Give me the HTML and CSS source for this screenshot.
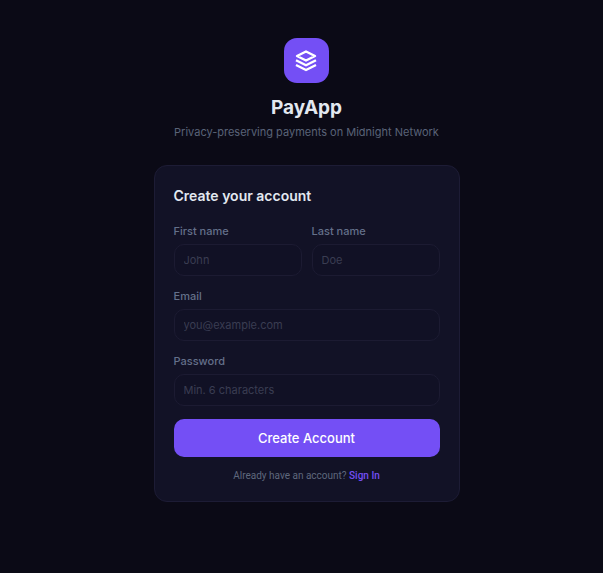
FILE: index.html
```html
<!DOCTYPE html>
<html lang="en">
<head>
<meta charset="utf-8">
<meta name="viewport" content="width=device-width, initial-scale=1">
<title>PayApp</title>
<link rel="stylesheet" href="styles.css">
</head>
<body>
<main class="page">
  <header class="brand">
    <div class="logo">
      <svg width="24" height="24" viewBox="0 0 24 24" fill="none" stroke="currentColor" stroke-width="2.4" stroke-linejoin="round" aria-hidden="true">
        <path d="M12 2.5 3 7l9 4.500L21 7l-9-4.500Z"/>
        <path d="m2 11.200 10 5 10-5"/>
        <path d="m2 16 10 5 10-5"/>
      </svg>
    </div>
    <h1 class="title">PayApp</h1>
    <p class="tagline">Privacy-preserving payments on Midnight Network</p>
  </header>
  <section class="card">
    <h2 class="heading">Create your account</h2>
    <form class="form">
      <div class="row">
        <div class="field">
          <label for="first">First name</label>
          <input id="first" type="text" placeholder="John">
        </div>
        <div class="field">
          <label for="last">Last name</label>
          <input id="last" type="text" placeholder="Doe">
        </div>
      </div>
      <div class="field">
        <label for="email">Email</label>
        <input id="email" type="email" placeholder="you@example.com">
      </div>
      <div class="field">
        <label for="password">Password</label>
        <input id="password" type="password" placeholder="Min. 6 characters">
      </div>
      <button class="submit" type="submit">Create Account</button>
    </form>
    <p class="switch">Already have an account? <a href="#">Sign In</a></p>
  </section>
</main>
</body>
</html>
```
FILE: styles.css
```css
* {
  box-sizing: border-box;
  margin: 0;
}

body {
  background: #0b0a16;
  color: #e2e8f0;
  font-family: Inter, "Liberation Sans", sans-serif;
}

.page {
  min-height: 100vh;
  display: flex;
  flex-direction: column;
  align-items: center;
  padding: 38px 6px 38px 16px;
}

.brand {
  display: flex;
  flex-direction: column;
  align-items: center;
  text-align: center;
}

.logo {
  display: grid;
  place-items: center;
  width: 45px;
  height: 45px;
  margin-bottom: 12px;
  border-radius: 13px;
  background: #744ff5;
  color: #fff;
}

.title {
  font-size: 19px;
  line-height: 26px;
  font-weight: 700;
}

.tagline {
  margin-top: 3px;
  font-size: 11px;
  line-height: 16px;
  color: #5a6378;
}

.card {
  width: 100%;
  max-width: 306px;
  margin-top: 25px;
  padding: 19px 19px 18px;
  border: 1px solid #1d1c35;
  border-radius: 13px;
  background: #121226;
}

.heading {
  font-size: 14px;
  line-height: 22px;
  font-weight: 600;
}

.form {
  display: flex;
  flex-direction: column;
  gap: 13px;
  margin-top: 17px;
}

.row {
  display: grid;
  grid-template-columns: 1fr 1fr;
  gap: 10px;
}

.field label {
  display: block;
  margin-bottom: 5px;
  font-size: 11px;
  line-height: 15px;
  font-weight: 500;
  color: #64708a;
}

.field input {
  display: block;
  width: 100%;
  height: 32px;
  padding: 0 9px;
  border: 1px solid #1c1b32;
  border-radius: 10px;
  background: #111125;
  color: #e2e8f0;
  font: inherit;
  font-size: 11px;
}

.field input::placeholder {
  color: #3a3d52;
  opacity: 1;
}

.submit {
  height: 38px;
  border: 0;
  border-radius: 10px;
  background: #744ff5;
  color: #fff;
  font: inherit;
  font-size: 13px;
  font-weight: 500;
}

.switch {
  margin-top: 12px;
  font-family: Roboto, "Liberation Sans", sans-serif;
  font-size: 10px;
  line-height: 14px;
  text-align: center;
  color: #5f687d;
}

.switch a {
  color: #744ff5;
  font-weight: 500;
  text-decoration: none;
}
```
